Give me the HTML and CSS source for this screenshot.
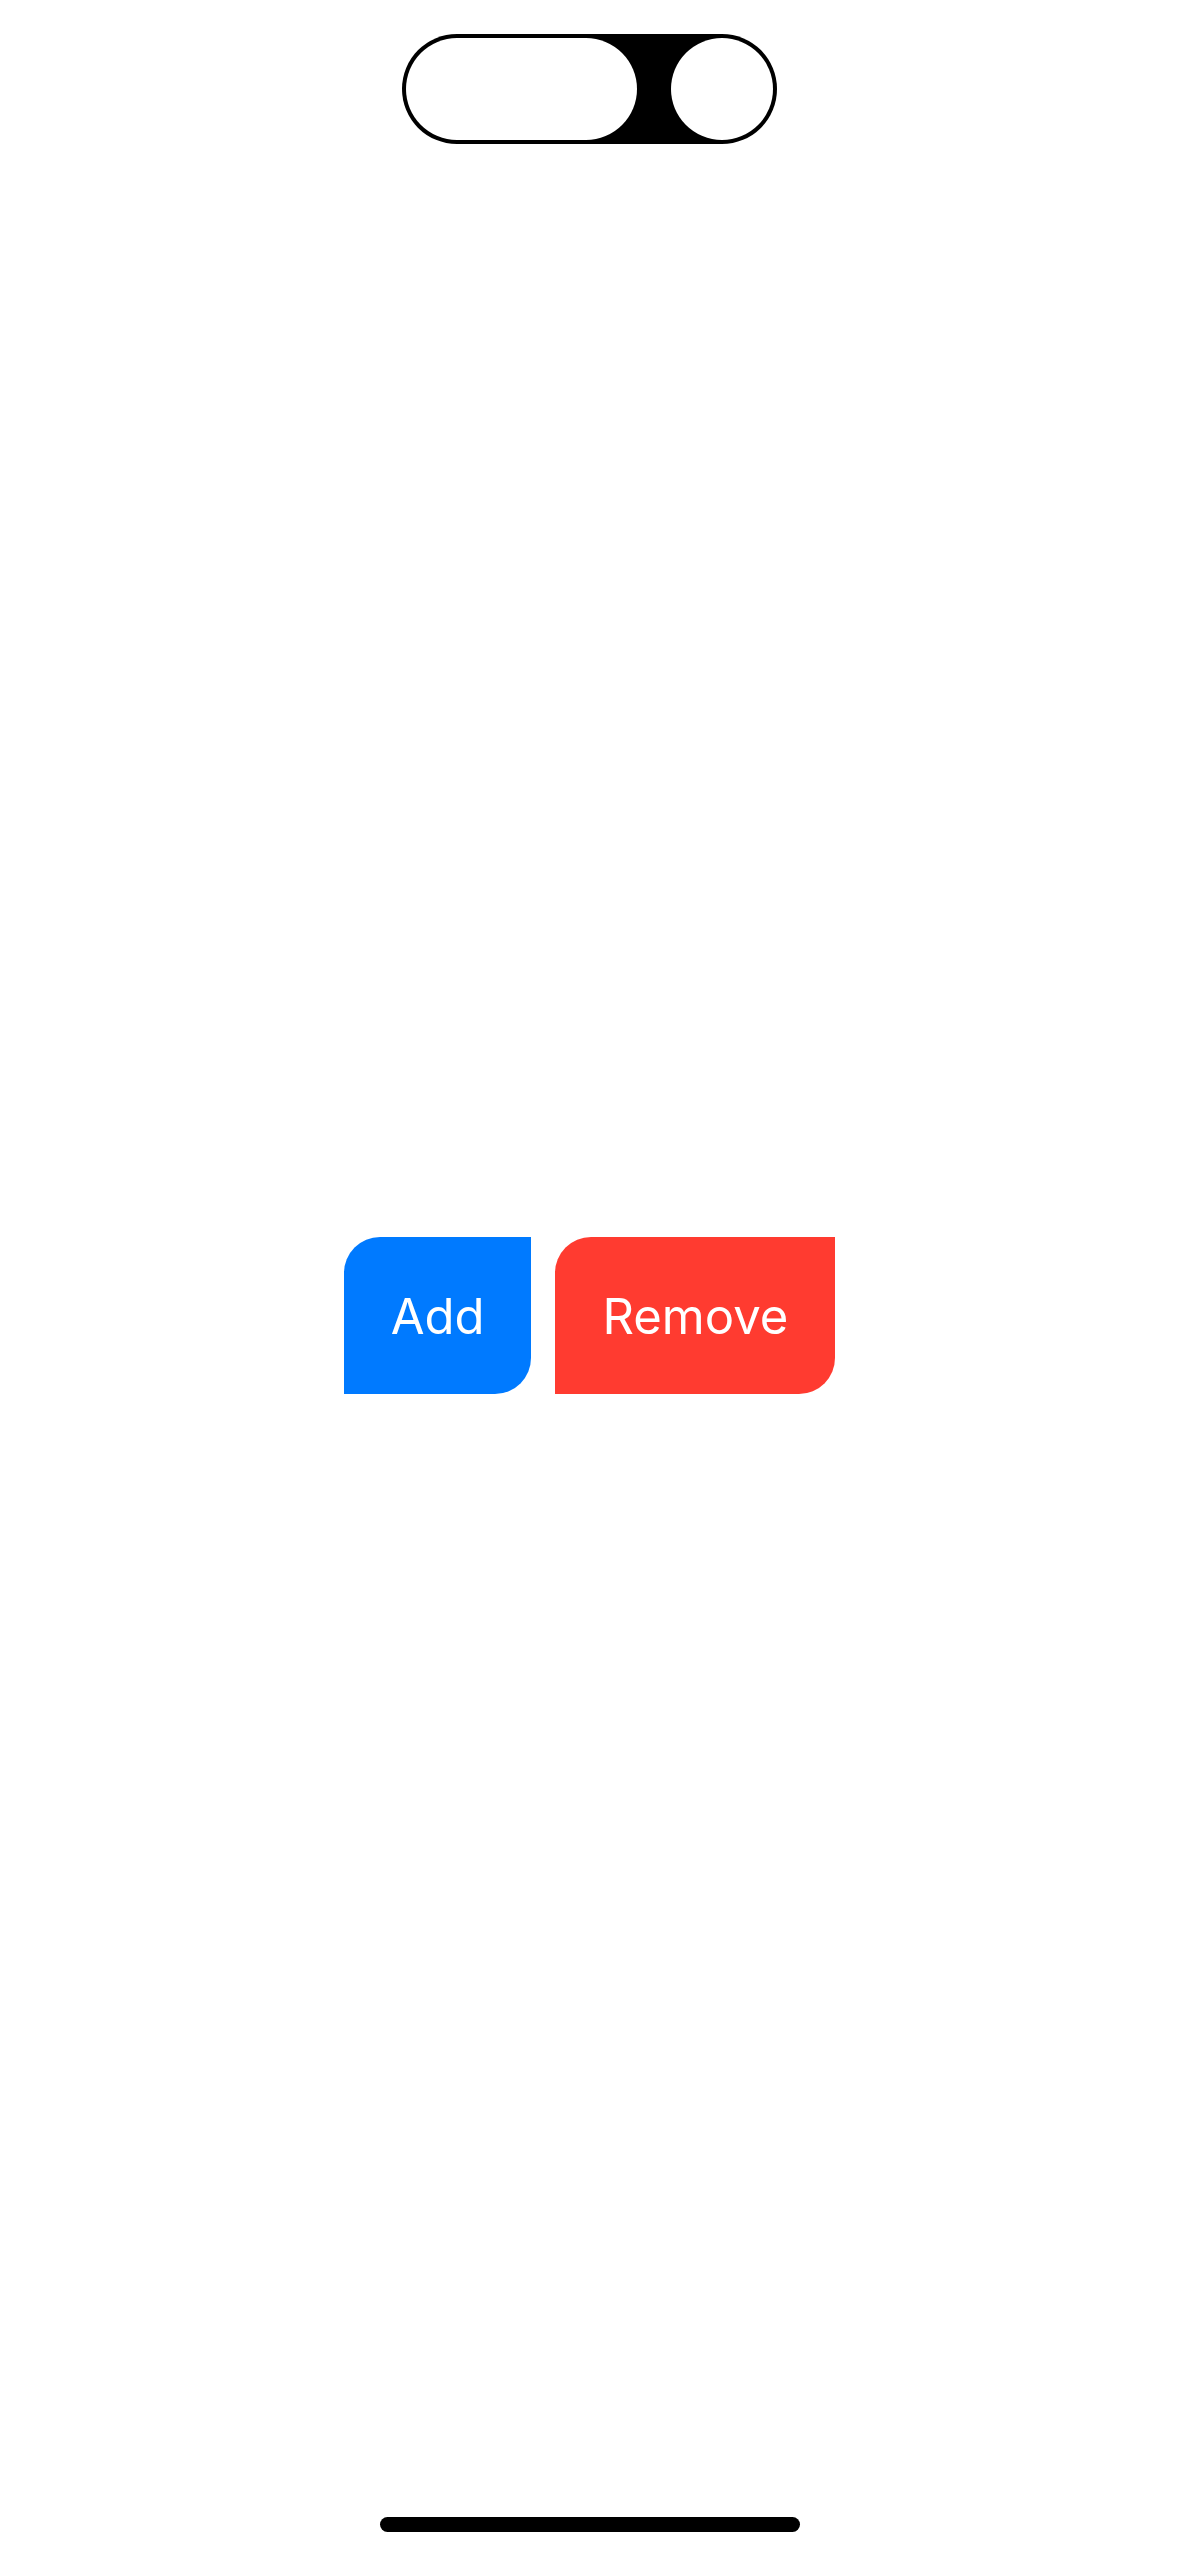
FILE: index.html
```html
<!DOCTYPE html>
<html lang="en">
<head>
  <meta charset="utf-8">
  <meta name="viewport" content="width=device-width, initial-scale=1">
  <title>Add / Remove</title>
  <link rel="stylesheet" href="styles.css">
</head>
<body>
  <header class="status-area">
    <div class="island">
      <span class="island-pill"></span>
      <span class="island-dot"></span>
    </div>
  </header>
  <main class="content">
    <button type="button" class="button button-add">Add</button>
    <button type="button" class="button button-remove">Remove</button>
  </main>
  <footer class="home-area">
    <div class="home-indicator"></div>
  </footer>
</body>
</html>
```

FILE: styles.css
```css
* {
  box-sizing: border-box;
}

body {
  display: flex;
  flex-direction: column;
  min-height: 100vh;
  margin: 0;
  background: #fff;
  font-family: Inter, "Liberation Sans", sans-serif;
}

/* Top safe area with the camera cut-out */
.status-area {
  display: flex;
  justify-content: center;
  align-items: flex-start;
  height: 177px;
  padding-top: 34px;
}

.island {
  display: flex;
  gap: 34px;
  height: 110px;
  padding: 4px;
  border-radius: 55px;
  background: #000;
}

.island-pill,
.island-dot {
  width: 102px;
  border-radius: 51px;
  background: #fff;
}

.island-pill {
  width: 231px;
}

.content {
  display: flex;
  flex: 1;
  justify-content: center;
  align-items: center;
  gap: 24px;
}

.button {
  padding: 49px 47px 47px;
  border: 0;
  border-radius: 36px 0;
  color: #fff;
  font-family: inherit;
  font-size: 49px;
  line-height: 61px;
  cursor: pointer;
}

.button-add {
  background: #007aff;
}

.button-remove {
  background: #ff3b30;
}

/* Bottom safe area */
.home-area {
  display: flex;
  justify-content: center;
  align-items: flex-end;
  height: 102px;
  padding-bottom: 24px;
}

.home-indicator {
  width: 420px;
  height: 15px;
  border-radius: 8px;
  background: #000;
}
```
